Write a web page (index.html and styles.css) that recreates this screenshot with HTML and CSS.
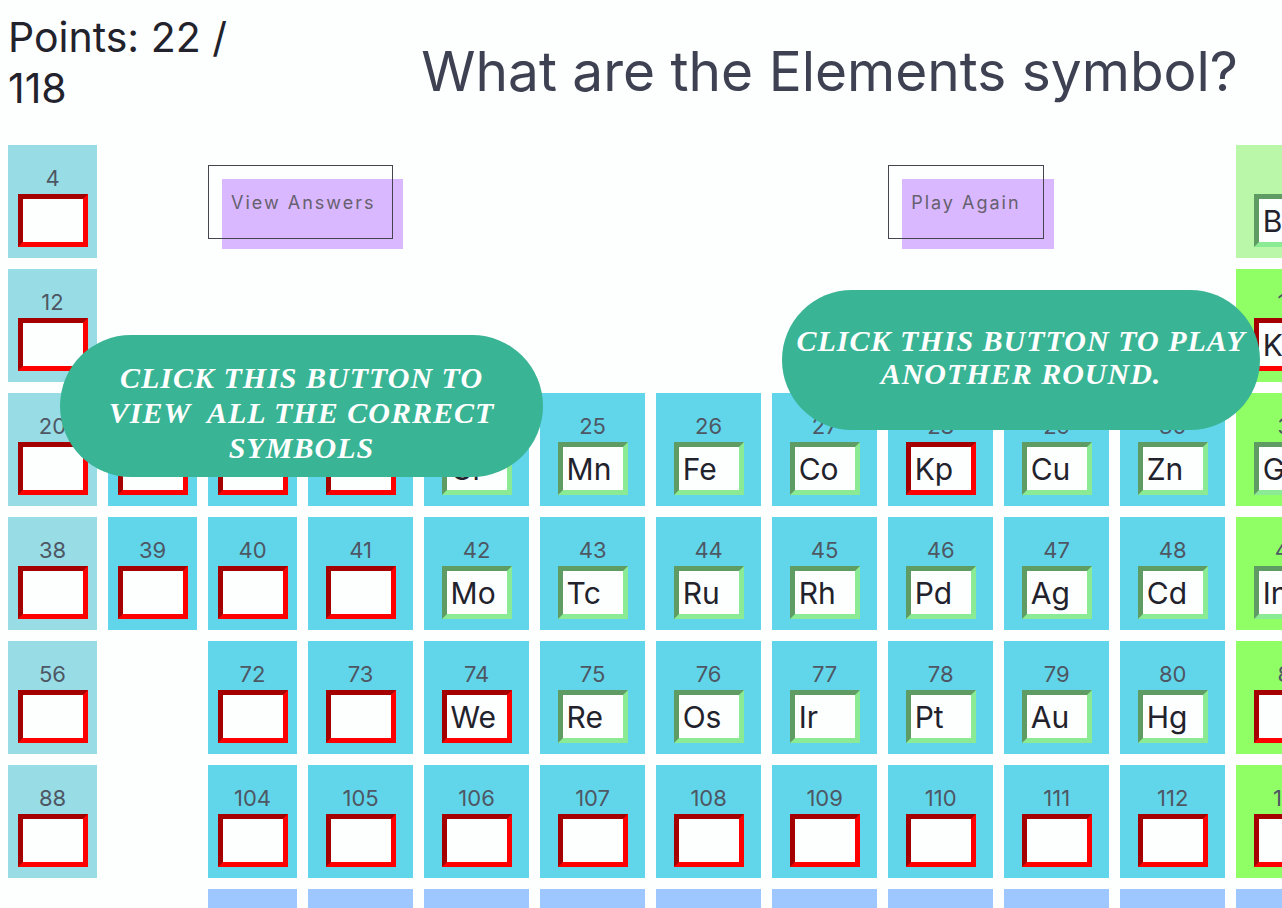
FILE: index.html
```html
<!DOCTYPE html>
<html lang="en">
<head>
<meta charset="utf-8">
<title>Periodic Table Quiz</title>
<link rel="stylesheet" href="styles.css">
</head>
<body>
<header class="header">
  <p class="points">Points: 22 / 118</p>
  <h1 class="question">What are the Elements symbol?</h1>
</header>
<main class="board">
  <label class="cell earth">4<input class="wrong"></label>
  <div class="action action-view"><button class="btn" type="button">View Answers</button></div>
  <div class="action action-play"><button class="btn" type="button">Play Again</button></div>
  <label class="cell metalloid last">5<input class="right" value="B"></label>

  <label class="cell earth">12<input class="wrong"></label>
  <label class="cell post last">13<input class="wrong" value="Kl"></label>

  <label class="cell earth">20<input class="wrong"></label>
  <label class="cell metal">21<input class="wrong"></label>
  <label class="cell metal">22<input class="wrong"></label>
  <label class="cell metal">23<input class="wrong"></label>
  <label class="cell metal">24<input class="right" value="Cr"></label>
  <label class="cell metal">25<input class="right" value="Mn"></label>
  <label class="cell metal">26<input class="right" value="Fe"></label>
  <label class="cell metal">27<input class="right" value="Co"></label>
  <label class="cell metal">28<input class="wrong" value="Kp"></label>
  <label class="cell metal">29<input class="right" value="Cu"></label>
  <label class="cell metal">30<input class="right" value="Zn"></label>
  <label class="cell post">31<input class="right" value="Ga"></label>

  <label class="cell earth">38<input class="wrong"></label>
  <label class="cell metal">39<input class="wrong"></label>
  <label class="cell metal">40<input class="wrong"></label>
  <label class="cell metal">41<input class="wrong"></label>
  <label class="cell metal">42<input class="right" value="Mo"></label>
  <label class="cell metal">43<input class="right" value="Tc"></label>
  <label class="cell metal">44<input class="right" value="Ru"></label>
  <label class="cell metal">45<input class="right" value="Rh"></label>
  <label class="cell metal">46<input class="right" value="Pd"></label>
  <label class="cell metal">47<input class="right" value="Ag"></label>
  <label class="cell metal">48<input class="right" value="Cd"></label>
  <label class="cell post">49<input class="right" value="In"></label>

  <label class="cell earth">56<input class="wrong"></label>
  <label class="cell metal third">72<input class="wrong"></label>
  <label class="cell metal">73<input class="wrong"></label>
  <label class="cell metal">74<input class="wrong" value="We"></label>
  <label class="cell metal">75<input class="right" value="Re"></label>
  <label class="cell metal">76<input class="right" value="Os"></label>
  <label class="cell metal">77<input class="right" value="Ir"></label>
  <label class="cell metal">78<input class="right" value="Pt"></label>
  <label class="cell metal">79<input class="right" value="Au"></label>
  <label class="cell metal">80<input class="right" value="Hg"></label>
  <label class="cell post">81<input class="wrong"></label>

  <label class="cell earth">88<input class="wrong"></label>
  <label class="cell metal third">104<input class="wrong"></label>
  <label class="cell metal">105<input class="wrong"></label>
  <label class="cell metal">106<input class="wrong"></label>
  <label class="cell metal">107<input class="wrong"></label>
  <label class="cell metal">108<input class="wrong"></label>
  <label class="cell metal">109<input class="wrong"></label>
  <label class="cell metal">110<input class="wrong"></label>
  <label class="cell metal">111<input class="wrong"></label>
  <label class="cell metal">112<input class="wrong"></label>
  <label class="cell post">113<input class="wrong"></label>

  <div class="cell rare third"></div>
  <div class="cell rare"></div>
  <div class="cell rare"></div>
  <div class="cell rare"></div>
  <div class="cell rare"></div>
  <div class="cell rare"></div>
  <div class="cell rare"></div>
  <div class="cell rare"></div>
  <div class="cell rare"></div>
  <div class="cell rare"></div>

  <p class="callout callout-view">CLICK THIS BUTTON TO<br>VIEW&nbsp; ALL THE CORRECT<br>SYMBOLS</p>
  <p class="callout callout-play">CLICK THIS BUTTON TO PLAY<br>ANOTHER ROUND.</p>
</main>
</body>
</html>
```
FILE: styles.css
```css
* {
  box-sizing: border-box;
}

body {
  margin: 0;
  height: 100vh;
  overflow: hidden;
  background: #fdfefe;
  color: #22222c;
  font-family: Inter, "Open Sans", sans-serif;
}

.header {
  display: grid;
  grid-template-columns: 250px 1fr;
  align-items: start;
  height: 145px;
  padding: 12px 44px 0 8px;
}

.points {
  margin: 0;
  font-size: 41px;
  font-weight: 400;
  line-height: 51px;
}

.question {
  margin: 0;
  padding-top: 28px;
  color: #3d4152;
  font-size: 55px;
  font-weight: 400;
  line-height: 62px;
  text-align: right;
  white-space: nowrap;
}

.board {
  position: relative;
  display: grid;
  grid-template-columns: repeat(3, 89fr) repeat(9, 105fr);
  grid-auto-rows: 113px;
  gap: 11px;
  width: 104vw;
  margin-left: 8px;
}

.cell {
  display: flex;
  flex-direction: column;
  align-items: center;
  padding-top: 18px;
  color: #4e5764;
  font-size: 22px;
  font-weight: 400;
  line-height: 31px;
}

.earth { grid-column: 1; background: #98dde6; }
.metal { background: #61d6ea; }
.metalloid { background: #baf7a8; }
.post { background: #90ff66; }
.rare { background: #9ec6ff; }
.third { grid-column: 3; }
.last { grid-column: 12; }

.cell input {
  width: 70px;
  height: 53px;
  padding: 0 4px;
  border: 5px solid;
  border-radius: 0;
  outline: 0;
  background: #fdfefe;
  color: #22222c;
  font-family: inherit;
  font-size: 30px;
  font-weight: 400;
}

.cell .right { border-color: #5f9c63 #8aeb94 #8aeb94 #5f9c63; }
.cell .wrong { border-color: #a50000 #ff0000 #ff0000 #a50000; }

.action {
  padding-top: 20px;
  isolation: isolate;
}

.action-view { grid-column: 3 / span 6; }
.action-play { grid-column: 9 / span 3; }

.btn {
  position: relative;
  height: 74px;
  padding: 0 22px;
  border: 1px solid #45454f;
  background: transparent;
  color: #66606e;
  font-family: inherit;
  font-size: 18px;
  letter-spacing: 2px;
}

.action-view .btn {
  padding-right: 16px;
}

.btn::before {
  position: absolute;
  inset: 13px -11px -11px 13px;
  z-index: -1;
  background: #d9b8ff;
  content: "";
}

.callout {
  position: absolute;
  margin: 0;
  border-radius: 72px;
  background: #39b494;
  color: #ffffff;
  font-family: "Liberation Serif", serif;
  font-size: 30px;
  font-style: italic;
  font-weight: 700;
  letter-spacing: 1px;
  text-align: center;
  white-space: nowrap;
}

.callout-view {
  top: 190px;
  left: 52px;
  width: 483px;
  padding: 25px 0 12px;
  line-height: 35px;
}

.callout-play {
  top: 145px;
  left: 774px;
  width: 478px;
  padding: 34px 0 40px;
  line-height: 33px;
}
```
